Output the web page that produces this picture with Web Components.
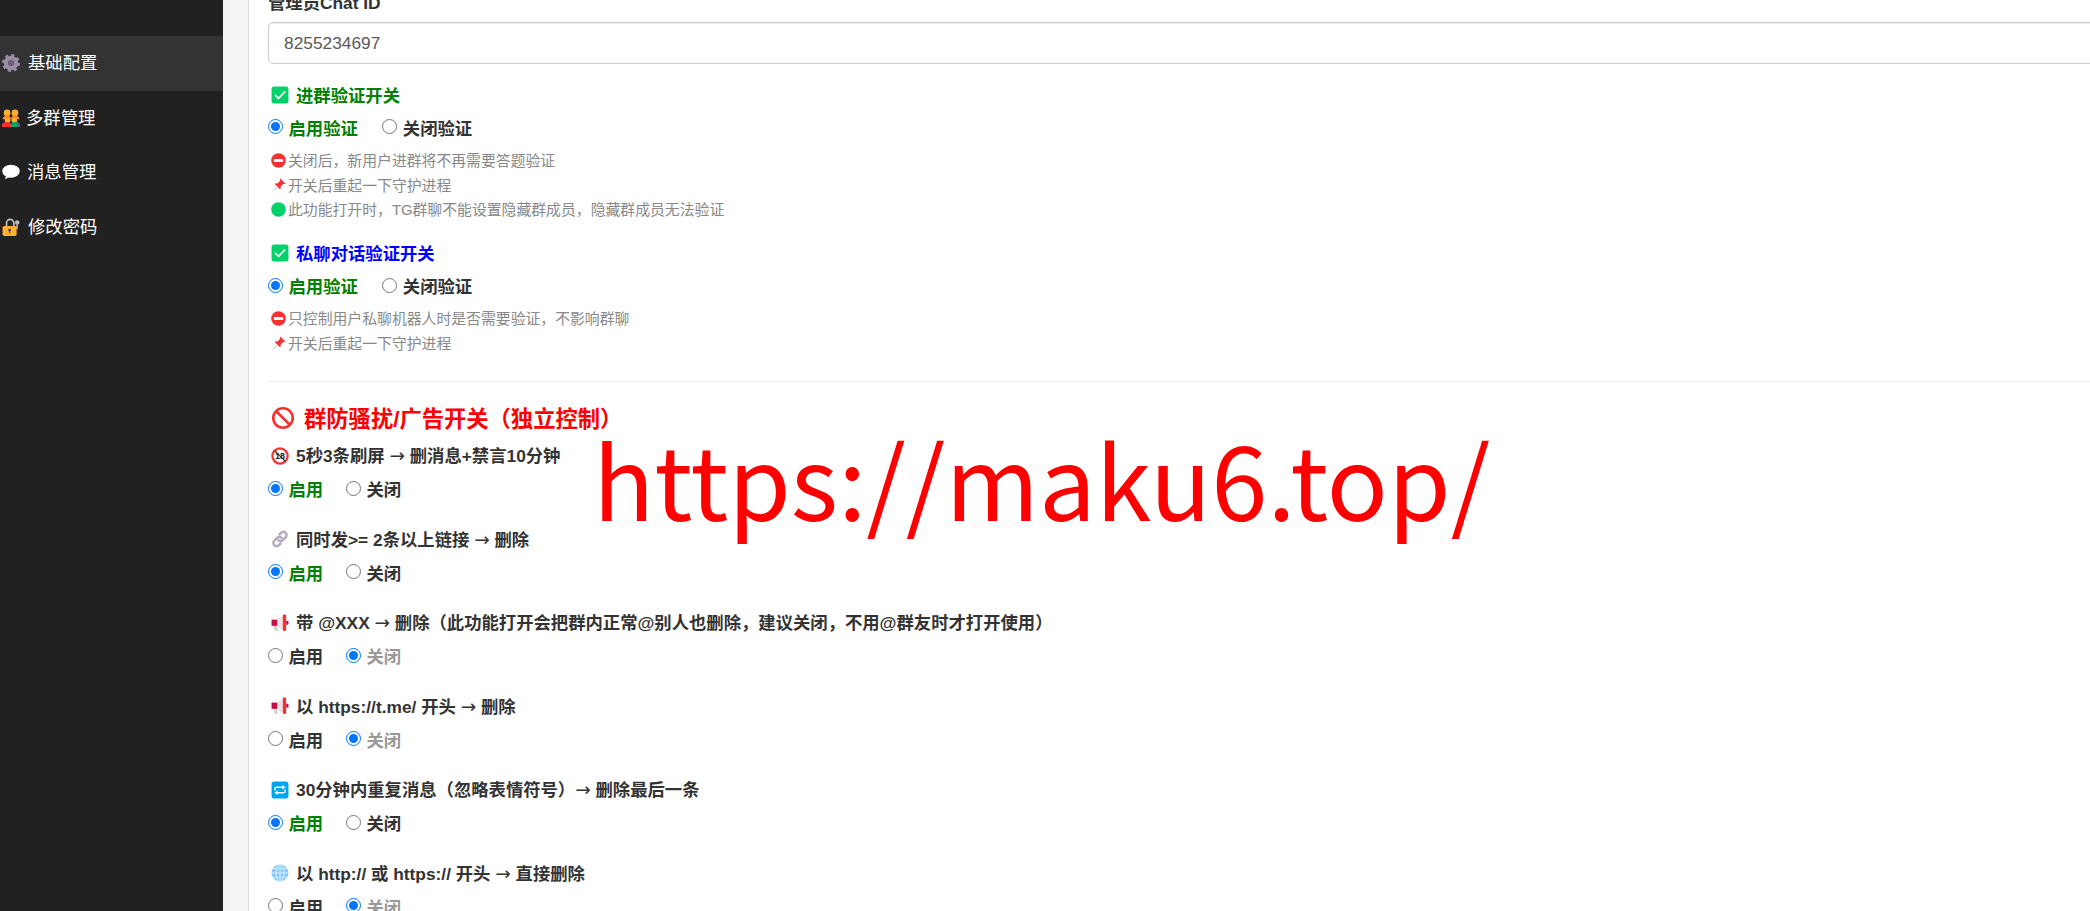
<!DOCTYPE html>
<html lang="zh">
<head>
<meta charset="utf-8">
<title>基础配置</title>
<style>
  html,body{margin:0;height:911px;overflow:hidden;background:#f4f4f4;}
  body{font-family:"Liberation Sans","Noto Sans CJK SC",sans-serif;font-size:17.330px;color:#333;text-spacing-trim:space-all;}
  .arrow{font-family:"DejaVu Sans",sans-serif;font-weight:400;font-size:18.500px;}
</style>
</head>
<body>
<admin-shell>
  <side-nav slot="nav">
    <nav-item icon="gear" gap="8" active>基础配置</nav-item>
    <nav-item icon="people" gap="6">多群管理</nav-item>
    <nav-item icon="balloon" gap="7">消息管理</nav-item>
    <nav-item icon="lock" gap="8">修改密码</nav-item>
  </side-nav>

  <config-card>
    <text-field label="管理员Chat ID" value="8255234697"></text-field>

    <verify-switch heading="进群验证开关" tone="#008000" first>
      <note-line icon="noentry">关闭后，新用户进群将不再需要答题验证</note-line>
      <note-line icon="pin">开关后重起一下守护进程</note-line>
      <note-line icon="greendot">此功能打开时，TG群聊不能设置隐藏群成员，隐藏群成员无法验证</note-line>
    </verify-switch>
    <verify-switch heading="私聊对话验证开关" tone="#0000ff">
      <note-line icon="noentry">只控制用户私聊机器人时是否需要验证，不影响群聊</note-line>
      <note-line icon="pin">开关后重起一下守护进程</note-line>
    </verify-switch>

    <section-title icon="prohibited">群防骚扰/广告开关（独立控制）</section-title>

    <toggle-option icon="under18" state="on">5秒3条刷屏 <span class="arrow">→</span> 删消息+禁言10分钟</toggle-option>
    <toggle-option icon="link" state="on">同时发&gt;= 2条以上链接 <span class="arrow">→</span> 删除</toggle-option>
    <toggle-option icon="megaphone" state="off">带 @XXX <span class="arrow">→</span> 删除（此功能打开会把群内正常@别人也删除，建议关闭，不用@群友时才打开使用）</toggle-option>
    <toggle-option icon="megaphone" state="off">以 https://t.me/ 开头 <span class="arrow">→</span> 删除</toggle-option>
    <toggle-option icon="repeat" state="on">30分钟内重复消息（忽略表情符号）<span class="arrow">→</span> 删除最后一条</toggle-option>
    <toggle-option icon="globe" state="off">以 http:// 或 https:// 开头 <span class="arrow">→</span> 直接删除</toggle-option>
  </config-card>
</admin-shell>
<water-mark>https://maku6.top/</water-mark>

<script>
const ICONS = {
  gear: `<g fill="none" stroke="#998ea4"><circle cx="16" cy="16" r="9" stroke-width="8"/><circle cx="16" cy="16" r="13" stroke-width="6" stroke-dasharray="5.2 5"/></g><circle cx="16" cy="16" r="5" fill="#6b6378"/>`,
  people: `<circle cx="9" cy="7" r="6" fill="#ffb02e"/><circle cx="23" cy="7" r="6" fill="#ffb02e"/><path d="M1 18c0-4 4-7 8-7s7 3 7 7H1zM16 18c0-4 3-7 7-7s8 3 8 7H16z" fill="#ff822d"/><circle cx="10" cy="20" r="5" fill="#ffb02e"/><circle cx="22" cy="20" r="5" fill="#ffb02e"/><path d="M0 32v-4c0-3 4-5 9-5s7 2 7 5v4H0z" fill="#f8312f"/><path d="M16 32v-4c0-3 2-5 7-5s9 2 9 5v4H16z" fill="#00a86b"/><path d="M27 24c3 1 5 2 5 4v4h-5z" fill="#635994"/>`,
  balloon: `<ellipse cx="16" cy="14.500" rx="15.500" ry="11.500" fill="#fff"/><path d="M8 21L5 29l11-5z" fill="#fff"/>`,
  lock: `<path d="M8 15V9a6.500 6.500 0 0 1 13 0v6" fill="none" stroke="#bebebe" stroke-width="3"/><circle cx="27" cy="8" r="4" fill="#bebebe"/><path d="M25 10h3.500v10H25z" fill="#9b9b9b"/><rect x="1" y="14" width="25" height="18" rx="3" fill="#ffb02e"/><circle cx="13.500" cy="21.500" r="2.500" fill="#433b6b"/><path d="M12.500 21h2v6h-2z" fill="#433b6b"/>`,
  check: `<rect x="1" y="1" width="30" height="30" rx="4.500" fill="#00d26a"/><path d="M8 16.500l5.500 5.500L24.500 10.500" fill="none" stroke="#fff" stroke-width="3" stroke-linecap="round" stroke-linejoin="round"/>`,
  noentry: `<circle cx="16" cy="16" r="15.500" fill="#f8312f"/><rect x="6" y="13" width="20" height="6" rx="1.500" fill="#fff"/>`,
  pin: `<path d="M1 31l11-12 2 2z" fill="#bebebe"/><path d="M20 1l11 11-3 1-1.500-1-6 6 .5 4-2 2L8 13l2-2 4 .5 6-6-1-1.500z" fill="#f8312f"/>`,
  greendot: `<circle cx="16" cy="16" r="15.500" fill="#00d26a"/>`,
  prohibited: `<circle cx="16" cy="16" r="13" fill="none" stroke="#f8312f" stroke-width="3.500"/><path d="M7 7l18 18" stroke="#f8312f" stroke-width="3.500"/>`,
  under18: `<circle cx="16" cy="16" r="13.500" fill="#fff" stroke="#f8312f" stroke-width="4"/><text x="16" y="22" text-anchor="middle" font-family="Liberation Sans" font-weight="700" font-size="16" fill="#212121">18</text><path d="M7 7l18 18" stroke="#212121" stroke-width="2"/>`,
  link: `<g fill="none" stroke="#b4acbc" stroke-width="4.500" stroke-linecap="round"><path d="M15 8l3-3a5.500 5.500 0 0 1 8 0 5.500 5.500 0 0 1 0 8l-5 5a5.500 5.500 0 0 1-8 0"/><path d="M17 24l-3 3a5.500 5.500 0 0 1-8 0 5.500 5.500 0 0 1 0-8l5-5a5.500 5.500 0 0 1 8 0"/></g>`,
  megaphone: `<path d="M4 21h7l1 9H7z" fill="#d3d3d3"/><path d="M10 9l12-6v26l-12-7z" fill="#e6e6e6"/><rect x="1" y="10" width="10" height="11" fill="#ca0b4a"/><rect x="21" y="1" width="6" height="29" rx="2" fill="#f8312f"/><rect x="27" y="12" width="4" height="7" rx="1.500" fill="#ca0b4a"/>`,
  repeat: `<rect x="1" y="1" width="30" height="30" rx="4.500" fill="#00a6ed"/><g fill="none" stroke="#fff" stroke-width="2.500" stroke-linejoin="round"><path d="M7 17v-3a3 3 0 0 1 3-3h12"/><path d="M25 15v3a3 3 0 0 1-3 3H10"/></g><path d="M20 7l6 4-6 4zM12 17l-6 4 6 4z" fill="#fff"/>`,
  globe: `<circle cx="16" cy="16" r="15" fill="#83cbff"/><g fill="none" stroke="#dff2ff" stroke-width="1.600"><ellipse cx="16" cy="16" rx="7" ry="15"/><path d="M16 1v30M1 16h30M3.500 8.500h25M3.500 23.500h25"/></g>`
};

class AppIcon extends HTMLElement {
  constructor() {
    super();
    this.attachShadow({ mode: "open" });
    const size = this.getAttribute('size') || 18;
    this.shadowRoot.innerHTML = `
      <style>
        :host{display:inline-flex;flex:none;width:${size}px;height:${size}px;}
        svg{width:100%;height:100%;display:block;}
      </style>
      <svg viewBox="0 0 32 32">${ICONS[this.getAttribute('name')] || ''}</svg>`;
  }
}
customElements.define('app-icon', AppIcon);

class AdminShell extends HTMLElement {
  constructor() {
    super();
    this.attachShadow({ mode: "open" });
    this.shadowRoot.innerHTML = `
      <style>
        :host{display:flex;height:911px;overflow:hidden;}
        .nav{flex:none;width:223px;background:#212121;}
        .main{flex:1;min-width:0;padding-left:25px;background:#f4f4f4;overflow:hidden;}
      </style>
      <div class="nav"><slot name="nav"></slot></div>
      <div class="main"><slot></slot></div>`;
  }
}
customElements.define('admin-shell', AdminShell);

class SideNav extends HTMLElement {
  constructor() {
    super();
    this.attachShadow({ mode: "open" });
    this.shadowRoot.innerHTML = `
      <style>:host{display:flex;flex-direction:column;padding-top:36px;}</style>
      <slot></slot>`;
  }
}
customElements.define('side-nav', SideNav);

class NavItem extends HTMLElement {
  constructor() {
    super();
    this.attachShadow({ mode: "open" });
    this.shadowRoot.innerHTML = `
      <style>
        :host{display:flex;align-items:center;height:54.500px;padding-left:2px;color:#fff;}
        :host([active]){background:#333;}
        .ico{margin-right:${this.getAttribute('gap')}px;}
        slot{display:block;margin-bottom:3px;}
      </style>
      <app-icon class="ico" name="${this.getAttribute('icon')}"></app-icon><slot></slot>`;
  }
}
customElements.define('nav-item', NavItem);

class ConfigCard extends HTMLElement {
  constructor() {
    super();
    this.attachShadow({ mode: "open" });
    this.shadowRoot.innerHTML = `
      <style>
        :host{display:block;box-sizing:border-box;width:2200px;height:1100px;margin-top:-9px;
              padding-left:19px;background:#fff;border-left:1px solid #ddd;}
      </style>
      <slot></slot>`;
  }
}
customElements.define('config-card', ConfigCard);

class TextField extends HTMLElement {
  constructor() {
    super();
    this.attachShadow({ mode: "open" });
    this.shadowRoot.innerHTML = `
      <style>
        :host{display:block;}
        label{display:block;font-weight:700;line-height:24px;margin-bottom:7px;color:#333;}
        input{display:block;box-sizing:border-box;width:1900px;height:42px;padding:0 15px;
              border:1px solid #ccc;border-radius:5px;font:17.330px "Liberation Sans","Noto Sans CJK SC",sans-serif;
              color:#5a5a5a;background:#fff;box-shadow:inset 0 1px 1px rgba(0,0,0,.075);outline:none;}
      </style>
      <label>${this.getAttribute('label')}</label>
      <input type="text" value="${this.getAttribute('value')}">`;
  }
}
customElements.define('text-field', TextField);

class RadioPair extends HTMLElement {
  // labels and which side is picked, the colour follows the picked side
  constructor() {
    super();
    this.attachShadow({ mode: "open" });
    const on = this.getAttribute('on');
    const off = this.getAttribute('off');
    const isOn = this.getAttribute('state') === 'on';
    const gap = this.getAttribute('gap');
    this.shadowRoot.innerHTML = `
      <style>
        :host{display:flex;align-items:center;height:24px;font-weight:700;color:#333;}
        label{display:flex;align-items:center;}
        input{width:15px;height:15px;margin:0 5.500px 3px 0;accent-color:#0075ff;}
        span{display:block;margin-bottom:2px;}
        .on{margin-right:${gap}px;}
        .on.picked{color:#008000;}
        .off.picked{color:#999;}
      </style>
      <label class="on ${isOn ? 'picked' : ''}"><input type="radio" name="r" ${isOn ? 'checked' : ''}><span>${on}</span></label>
      <label class="off ${isOn ? '' : 'picked'}"><input type="radio" name="r" ${isOn ? '' : 'checked'}><span>${off}</span></label>`;
  }
}
customElements.define('radio-pair', RadioPair);

class NoteLine extends HTMLElement {
  constructor() {
    super();
    this.attachShadow({ mode: "open" });
    this.shadowRoot.innerHTML = `
      <style>
        :host{display:flex;align-items:center;height:24.600px;padding-left:3px;font-size:14.850px;color:#888;}
        app-icon{margin-right:2px;}
        slot{display:block;margin-bottom:2px;}
      </style>
      <app-icon name="${this.getAttribute('icon')}" size="15"></app-icon><slot></slot>`;
  }
}
customElements.define('note-line', NoteLine);

class VerifySwitch extends HTMLElement {
  constructor() {
    super();
    this.attachShadow({ mode: "open" });
    this.shadowRoot.innerHTML = `
      <style>
        :host{display:block;margin-top:19px;}
        .head{display:flex;align-items:center;height:24px;padding-left:2.500px;font-weight:700;
              color:${this.getAttribute('tone')};margin-bottom:9.400px;}
        .head span{margin-bottom:2px;}
        app-icon{margin-right:7.500px;}
        .notes{margin-top:8px;}
      </style>
      <div class="head"><app-icon name="check"></app-icon><span>${this.getAttribute('heading')}</span></div>
      <radio-pair on="启用验证" off="关闭验证" state="on" gap="24.500"></radio-pair>
      <div class="notes"><slot></slot></div>`;
  }
}
customElements.define('verify-switch', VerifySwitch);

class SectionTitle extends HTMLElement {
  constructor() {
    super();
    this.attachShadow({ mode: "open" });
    this.shadowRoot.innerHTML = `
      <style>
        :host{display:block;margin-top:25px;padding-bottom:11px;}
        hr{border:0;border-top:1px solid #eee;margin:0 0 21px;}
        .t{display:flex;align-items:center;height:30px;padding-left:3px;font-size:22.300px;font-weight:700;color:#f00;}
        app-icon{margin-right:9px;}
        slot{display:block;margin-bottom:2px;}
      </style>
      <hr>
      <div class="t"><app-icon name="prohibited" size="24"></app-icon><slot></slot></div>`;
  }
}
customElements.define('section-title', SectionTitle);

class ToggleOption extends HTMLElement {
  constructor() {
    super();
    this.attachShadow({ mode: "open" });
    this.shadowRoot.innerHTML = `
      <style>
        :host{display:block;margin-bottom:25.500px;}
        .t{display:flex;align-items:center;height:24px;padding-left:2.500px;font-weight:700;color:#333;margin-bottom:10px;white-space:nowrap;}
        app-icon{margin-right:7.500px;}
        slot{display:block;margin-bottom:2px;}
      </style>
      <div class="t"><app-icon name="${this.getAttribute('icon')}"></app-icon><slot></slot></div>
      <radio-pair on="启用" off="关闭" state="${this.getAttribute('state')}" gap="22.800"></radio-pair>`;
  }
}
customElements.define('toggle-option', ToggleOption);

class WaterMark extends HTMLElement {
  constructor() {
    super();
    this.attachShadow({ mode: "open" });
    this.shadowRoot.innerHTML = `
      <style>
        :host{position:absolute;left:593px;top:412px;font:101px/1.300 "Noto Sans CJK SC",sans-serif;color:#f00;white-space:nowrap;}
      </style>
      <slot></slot>`;
  }
}
customElements.define('water-mark', WaterMark);
</script>
</body>
</html>
